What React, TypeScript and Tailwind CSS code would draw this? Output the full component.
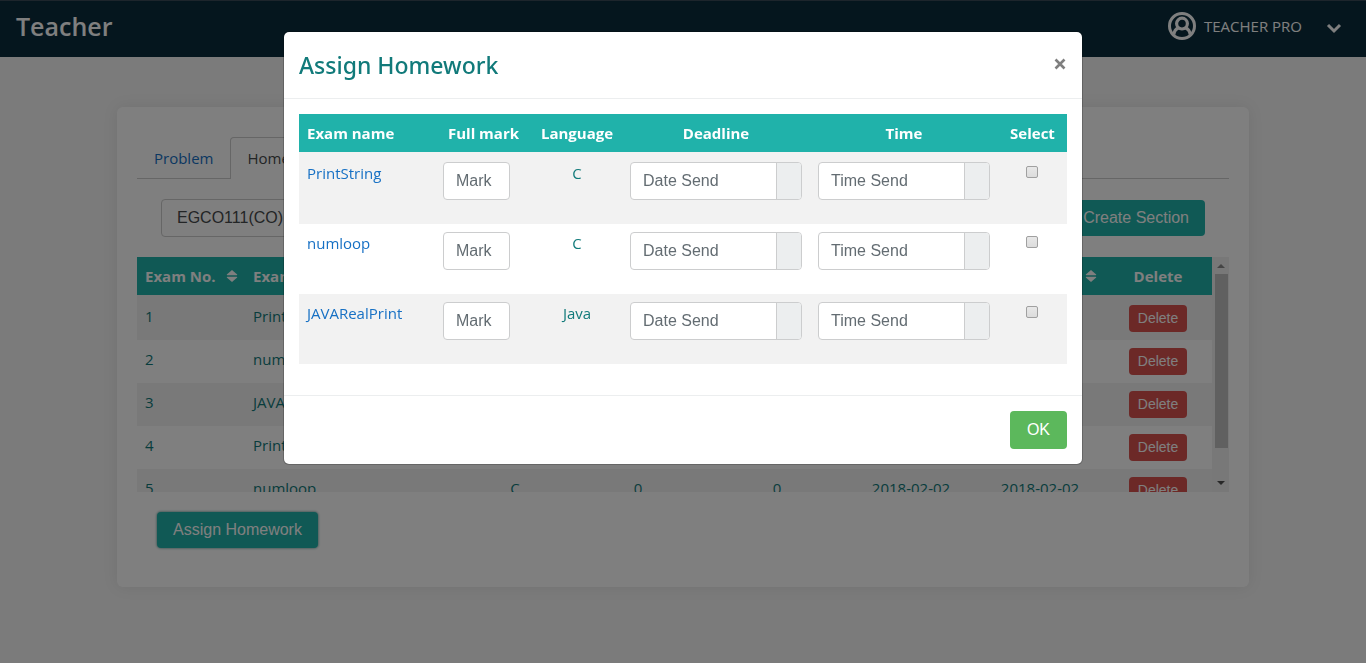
import React from "react";

type Homework = {
  no: number;
  name: string;
  language: string;
  full: number;
  average: number;
  start: string;
  end: string;
};

const homeworks: Homework[] = [
  { no: 1, name: "PrintString", language: "C", full: 0, average: 0, start: "2018-02-02", end: "2018-02-02" },
  { no: 2, name: "numloop", language: "C", full: 0, average: 0, start: "2018-02-02", end: "2018-02-02" },
  { no: 3, name: "JAVARealPrint", language: "Java", full: 0, average: 0, start: "2018-02-02", end: "2018-02-02" },
  { no: 4, name: "PrintString", language: "C", full: 0, average: 0, start: "2018-02-02", end: "2018-02-02" },
  { no: 5, name: "numloop", language: "C", full: 0, average: 0, start: "2018-02-02", end: "2018-02-02" },
];

const exams = [
  { name: "PrintString", language: "C" },
  { name: "numloop", language: "C" },
  { name: "JAVARealPrint", language: "Java" },
];

const sortableColumns = ["Exam name", "Language", "Full mark", "Average", "Assign date", "Deadline"];

function SortIcon() {
  return (
    <svg className="h-3 w-3 shrink-0" viewBox="0 0 12 12" fill="currentColor" aria-hidden="true">
      <path d="M6 0 11.2 4.4Q11.5 5.2 10.6 5.2H1.4Q0.5 5.2 0.8 4.4Z" />
      <path d="M6 12 0.8 7.6Q0.5 6.8 1.4 6.8H10.6Q11.5 6.8 11.2 7.6Z" />
    </svg>
  );
}

function UserIcon() {
  return (
    <svg className="h-7 w-7" viewBox="0 0 28 28" fill="none" stroke="currentColor" aria-hidden="true">
      <circle cx="14" cy="14" r="12.5" strokeWidth="3" />
      <circle cx="14" cy="11.6" r="5.4" strokeWidth="3.2" />
      <path d="M5.8 22.4C6.3 19 8 17 10.6 15.8M22.2 22.4C21.7 19 20 17 17.4 15.8" strokeWidth="3.2" />
    </svg>
  );
}

function Navbar() {
  return (
    <header className="flex h-[57px] items-center justify-between border-t border-[#3a4a58] bg-[#0a2d3d] pr-6 pl-4 text-white">
      <a href="#" className="pb-1.5 text-[25px] leading-8 font-semibold">
        Teacher
      </a>
      <button type="button" className="flex items-center pb-1.5 text-[15px]">
        <UserIcon />
        <span className="ml-2">TEACHER PRO</span>
        <svg className="mt-1 ml-6 h-4 w-4" viewBox="0 0 16 16" fill="none" stroke="currentColor" strokeWidth="3" aria-hidden="true">
          <path d="M2 5 8 11 14 5" />
        </svg>
      </button>
    </header>
  );
}

function HomeworkTable() {
  return (
    <div className="mt-5 flex h-[235px] overflow-hidden">
      <div className="min-w-0 flex-1 overflow-hidden">
        <table className="w-full table-fixed border-separate border-spacing-0 text-center text-[15px] leading-6 text-[#117a7a]">
          <colgroup>
            <col className="w-[108px]" />
            <col className="w-[217px]" />
            <col className="w-[106px]" />
            <col className="w-[140px]" />
            <col className="w-[138px]" />
            <col className="w-[130px]" />
            <col className="w-[128px]" />
            <col className="w-[108px]" />
          </colgroup>
          <thead className="bg-[#20b2aa] text-white">
            <tr className="h-[38px]">
              <th className="pr-[7px] pl-2 font-bold whitespace-nowrap">
                <span className="flex items-center justify-between">
                  Exam No. <SortIcon />
                </span>
              </th>
              {sortableColumns.map((label) => (
                <th key={label} className="pr-[7px] pl-2 text-left font-bold whitespace-nowrap">
                  <span className="flex items-center justify-between">
                    {label} <SortIcon />
                  </span>
                </th>
              ))}
              <th className="px-2 font-bold">Delete</th>
            </tr>
          </thead>
          <tbody>
            <tr className="h-0.5 bg-[#f2f2f2]" aria-hidden="true">
              <td colSpan={8} className="p-0" />
            </tr>
            {homeworks.map((row) => (
              <tr key={row.no} className="h-[43px] align-top even:bg-[#f2f2f2]">
                <td className="px-2 pt-[7px] text-left">{row.no}</td>
                <td className="px-2 pt-[7px] text-left">{row.name}</td>
                <td className="pt-[7px]">{row.language}</td>
                <td className="pt-[7px]">{row.full}</td>
                <td className="pt-[7px]">{row.average}</td>
                <td className="pt-[7px]">{row.start}</td>
                <td className="pt-[7px]">{row.end}</td>
                <td className="pt-2">
                  <button type="button" className="mx-auto flex h-[27px] items-center rounded bg-[#d9534f] px-[9px] pb-0.5 font-[Liberation_Sans,sans-serif] text-sm text-white">
                    Delete
                  </button>
                </td>
              </tr>
            ))}
          </tbody>
        </table>
      </div>
      <div className="flex w-[17px] flex-col items-center bg-[#f1f1f1]" aria-hidden="true">
        <svg className="h-[17px] w-[17px]" viewBox="0 0 17 17" fill="#8a8a8a">
          <path d="M5 11 9 7 13 11Z" />
        </svg>
        <div className="ml-0.5 h-[174px] w-[13px] bg-[#c1c1c1]" />
        <div className="flex-1" />
        <svg className="h-[17px] w-[17px]" viewBox="0 0 17 17" fill="#505050">
          <path d="M5 6 9 10 13 6Z" />
        </svg>
      </div>
    </div>
  );
}

function InputGroup({ label, name }: { label: string; name: string }) {
  return (
    <div className="flex h-[38px] overflow-hidden rounded border border-[#cccdce] bg-white">
      <input
        type="text"
        placeholder={label}
        aria-label={`${label} for ${name}`}
        className="w-full min-w-0 flex-1 px-3 font-[Liberation_Sans,sans-serif] text-base placeholder:text-[#636c72]"
      />
      <span className="w-[25px] border-l border-[#cccdce] bg-[#eceeef]" />
    </div>
  );
}

function AssignModal() {
  return (
    <div className="fixed inset-0 overflow-hidden bg-black/50 px-4">
      <div
        role="dialog"
        aria-modal="true"
        aria-labelledby="assign-title"
        className="mx-auto mt-[31px] max-w-[800px] rounded-md border border-black/20 bg-white bg-clip-padding"
      >
        <div className="flex items-center justify-between border-b border-[#eceeef] p-[15px]">
          <h4 id="assign-title" className="font-[Noto_Sans,sans-serif] text-[23px] leading-9 font-medium text-[#117a7a]">
            Assign Homework
          </h4>
          <button type="button" aria-label="Close" className="mb-0.5 text-[#7f7f7f]">
            <svg className="h-3.5 w-3.5" viewBox="0 0 14 14" fill="none" stroke="currentColor" strokeWidth="2.6" aria-hidden="true">
              <path d="M2.5 2.5 11.5 11.5M11.5 2.5 2.5 11.5" />
            </svg>
          </button>
        </div>
        <div className="px-[15px] pt-[15px] pb-[31px]">
          <table className="w-full table-fixed border-separate border-spacing-0 text-center text-[15px] leading-6 text-[#117a7a]">
            <colgroup>
              <col className="w-[136px]" />
              <col className="w-[97px]" />
              <col className="w-[90px]" />
              <col className="w-[188px]" />
              <col className="w-[188px]" />
              <col className="w-[69px]" />
            </colgroup>
            <thead className="bg-[#20b2aa] text-white">
              <tr className="h-[38px] whitespace-nowrap">
                <th className="px-2 text-left font-bold">Exam name</th>
                <th className="font-bold">Full mark</th>
                <th className="font-bold">Language</th>
                <th className="font-bold">Deadline</th>
                <th className="font-bold">Time</th>
                <th className="font-bold">Select</th>
              </tr>
            </thead>
            <tbody>
              <tr className="h-0.5 bg-[#f2f2f2]" aria-hidden="true">
                <td colSpan={6} className="p-0" />
              </tr>
              {exams.map((exam) => (
                <tr key={exam.name} className="h-[70px] align-top even:bg-[#f2f2f2]">
                  <td className="px-2 pt-[7px] text-left">
                    <a href="#" className="text-[#1670c4]">
                      {exam.name}
                    </a>
                  </td>
                  <td className="px-2 pt-2">
                    <input
                      type="text"
                      placeholder="Mark"
                      aria-label={`Mark for ${exam.name}`}
                      className="block h-[38px] w-[67px] rounded border border-[#cccdce] bg-white px-3 font-[Liberation_Sans,sans-serif] text-base placeholder:text-[#636c72]"
                    />
                  </td>
                  <td className="pt-[7px]">{exam.language}</td>
                  <td className="px-2 pt-2">
                    <InputGroup label="Date Send" name={exam.name} />
                  </td>
                  <td className="px-2 pt-2">
                    <InputGroup label="Time Send" name={exam.name} />
                  </td>
                  <td className="pt-3 pr-0.5">
                    <input
                      type="checkbox"
                      aria-label={`Select ${exam.name}`}
                      className="mx-auto block h-3 w-3 appearance-none rounded-xs border border-[#a0a0a0] bg-linear-to-b from-[#e8e8e8] to-[#dcdcdc] checked:bg-[#20b2aa]"
                    />
                  </td>
                </tr>
              ))}
            </tbody>
          </table>
        </div>
        <div className="flex justify-end border-t border-[#eceeef] p-[15px]">
          <button type="button" className="h-[38px] rounded bg-[#5cb85c] px-[17px] font-[Liberation_Sans,sans-serif] text-base text-white">
            OK
          </button>
        </div>
      </div>
    </div>
  );
}

export default function App() {
  return (
    <div className="min-h-screen bg-[#f6f6f6] font-[Open_Sans,sans-serif]">
      <Navbar />
      <main className="mx-auto mt-[50px] h-[480px] max-w-[1132px] rounded-md bg-white px-5 pt-[30px] shadow-[0_0_16px_rgba(0,0,0,0.08)]">
        <nav className="flex h-[42px] border-b border-[#ccc] text-[15px] leading-6">
          <a href="#" className="px-[17px] pt-[9px] text-[#1670c4]">
            Problem
          </a>
          <a href="#" className="h-[42px] rounded-t border border-b-0 border-[#ccc] bg-white px-4 pt-2 text-[#464a4c]">
            Homework
          </a>
        </nav>
        <div className="mt-5 flex items-center justify-between pr-6 pl-6 font-[Liberation_Sans,sans-serif]">
          <select aria-label="Section" className="h-[38px] w-[200px] appearance-none rounded border border-[#ccc] bg-white px-[15px] text-base text-[#464a4c]">
            <option>EGCO111(CO)</option>
          </select>
          <button type="button" className="h-9 rounded bg-[#20b2aa] px-4 text-base text-white">
            Create Section
          </button>
        </div>
        <HomeworkTable />
        <div className="mt-5 pl-5">
          <button type="button" className="h-9 rounded bg-[#20b2aa] px-4 font-[Liberation_Sans,sans-serif] text-base text-white shadow-[0_0_2px_1px_rgba(32,120,115,0.4)]">
            Assign Homework
          </button>
        </div>
      </main>
      <AssignModal />
    </div>
  );
}
